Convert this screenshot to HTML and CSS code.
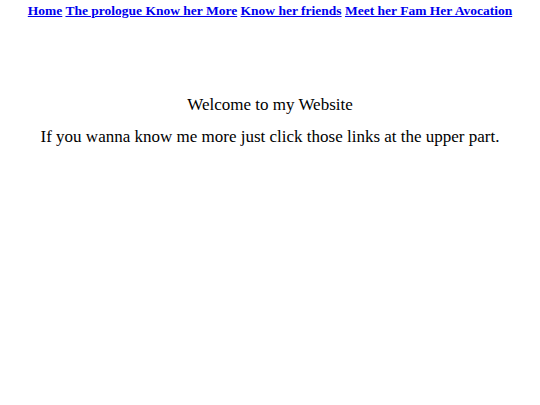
FILE: index.html
```html
<!DOCTYPE html>
<html>
<head>
<meta charset="utf-8">
<link rel="stylesheet" href="styles.css">
</head>
<body>
<nav class="nav">
<a href="#">Home</a> <a href="#">The prologue Know her More</a> <a href="#">Know her friends</a> <a href="#">Meet her Fam Her Avocation</a>
</nav>
<main class="intro">
<p class="welcome">Welcome to my Website</p>
<p class="lead">If you wanna know me more just click those links at the upper part.</p>
</main>
</body>
</html>
```
FILE: styles.css
```css
body {
  margin: 0;
  font-family: "Liberation Serif", "Times New Roman", serif;
  background: #fff;
  color: #000;
}
.nav {
  text-align: center;
  font-size: 13.5px;
  font-weight: bold;
  padding-top: 3px;
  line-height: 16px;
  height: 18px;
}
.nav a {
  color: #0000ee;
  text-decoration: underline;
}
.intro {
  text-align: center;
  padding-top: 73px;
  font-size: 17px;
}
.welcome {
  margin: 0;
  line-height: 21px;
}
.lead {
  margin: 11px 0 0;
  line-height: 21px;
}
```
